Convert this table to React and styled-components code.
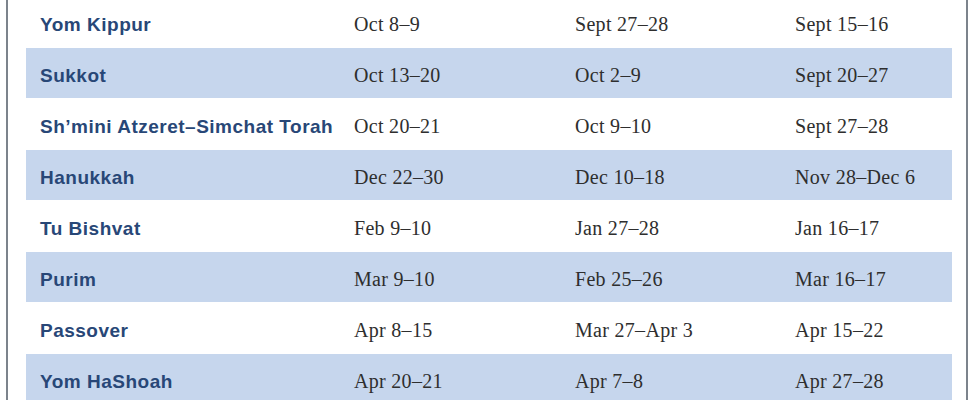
import styled, { createGlobalStyle } from "styled-components";

const GlobalStyle = createGlobalStyle`
  body {
    margin: 0;
    background: #ffffff;
    overflow: hidden;
  }
`;

const holidays = [
  { name: "Yom Kippur", dates: ["Oct 8–9", "Sept 27–28", "Sept 15–16"] },
  { name: "Sukkot", dates: ["Oct 13–20", "Oct 2–9", "Sept 20–27"] },
  {
    name: "Sh’mini Atzeret–Simchat Torah",
    dates: ["Oct 20–21", "Oct 9–10", "Sept 27–28"],
  },
  { name: "Hanukkah", dates: ["Dec 22–30", "Dec 10–18", "Nov 28–Dec 6"] },
  { name: "Tu Bishvat", dates: ["Feb 9–10", "Jan 27–28", "Jan 16–17"] },
  { name: "Purim", dates: ["Mar 9–10", "Feb 25–26", "Mar 16–17"] },
  { name: "Passover", dates: ["Apr 8–15", "Mar 27–Apr 3", "Apr 15–22"] },
  { name: "Yom HaShoah", dates: ["Apr 20–21", "Apr 7–8", "Apr 27–28"] },
];

const App = () => {
  return (
    <>
      <GlobalStyle />
      <Frame>
        <HolidayList>
          {holidays.map((holiday, i) => (
            <HolidayRow key={holiday.name} $shaded={i % 2 === 1}>
              <NameCell>{holiday.name}</NameCell>
              {holiday.dates.map((date) => (
                <DateCell key={date}>{date}</DateCell>
              ))}
            </HolidayRow>
          ))}
        </HolidayList>
      </Frame>
    </>
  );
};

const Frame = styled.div`
  margin-left: 6px;
  width: 926px;
  height: 400px;
  border-left: 2px solid #7c838c;
  border-right: 2px solid #7c838c;
  padding: 0 14px 0 18px;
  overflow: hidden;
`;

const HolidayList = styled.div`
  display: flex;
  flex-direction: column;
  gap: 1px;
  margin-top: -3px;
`;

const HolidayRow = styled.div`
  display: grid;
  grid-template-columns: 314px 221px 220px 1fr;
  align-items: center;
  height: 50px;
  padding-top: 5px;
  box-sizing: border-box;
  background: ${({ $shaded }) => ($shaded ? "#c6d6ed" : "#ffffff")};
`;

const NameCell = styled.div`
  padding-left: 14px;
  font-family: "Liberation Sans", Arial, sans-serif;
  font-weight: 700;
  font-size: 19px;
  letter-spacing: 0.5px;
  color: #284777;
  white-space: nowrap;
`;

const DateCell = styled.div`
  padding-left: 14px;
  font-family: "Liberation Serif", "Times New Roman", serif;
  font-size: 20px;
  letter-spacing: 0.3px;
  color: #2e2e2e;
  white-space: nowrap;
`;

export default App;
